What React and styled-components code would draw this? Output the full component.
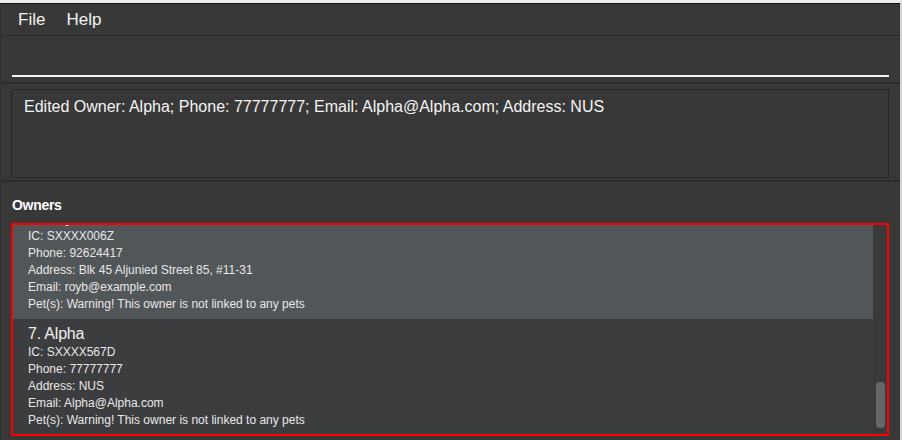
import React from 'react';
import styled, { createGlobalStyle } from 'styled-components';

const GlobalStyle = createGlobalStyle`
  html, body {
    margin: 0;
    padding: 0;
    background: #383838;
  }
  body {
    font-family: "Liberation Sans", Arial, sans-serif;
  }
`;

const Window = styled.div`
  width: 902px;
  height: 440px;
  box-sizing: border-box;
  border-top: 3px solid #ededed;
  border-right: 2px solid #d4d4d4;
  background: #383838;
  display: flex;
  flex-direction: column;
  overflow: hidden;
`;

const Frame = styled.div`
  flex: 1;
  display: flex;
  flex-direction: column;
  border-top: 1px solid #141414;
  border-left: 1px solid #303030;
  min-height: 0;
`;

const MenuBar = styled.div`
  height: 31px;
  flex-shrink: 0;
  display: flex;
  align-items: center;
  gap: 21px;
  padding-left: 17px;
  border-bottom: 1px solid #2a2a2a;
`;

const MenuItem = styled.span`
  color: #f2f2f2;
  font-size: 17px;
  line-height: 20px;
`;

const CommandArea = styled.div`
  height: 46px;
  flex-shrink: 0;
  padding: 0 11px;
  display: flex;
  align-items: flex-end;
  border-bottom: 2px solid #2c2c2c;
`;

const CommandInput = styled.div`
  flex: 1;
  height: 38px;
  border-bottom: 2px solid #f4f4f4;
  margin-bottom: 5px;
`;

const ResultArea = styled.div`
  height: 98px;
  flex-shrink: 0;
  padding: 5px 11px 0 10px;
  box-sizing: border-box;
  border-bottom: 2px solid #2c2c2c;
`;

const ResultBox = styled.div`
  height: 89px;
  box-sizing: border-box;
  border: 1px solid #262626;
  padding: 8px 12px;
  color: #f4f4f4;
  font-size: 16px;
`;

const ListSection = styled.div`
  flex: 1;
  display: flex;
  flex-direction: column;
  padding: 15px 11px 4px 10px;
  min-height: 0;
`;

const SectionTitle = styled.div`
  color: #ffffff;
  font-size: 14px;
  font-weight: bold;
  letter-spacing: -0.3px;
  margin-left: 1px;
  height: 26px;
  flex-shrink: 0;
`;

const ListBox = styled.div`
  flex: 1;
  display: flex;
  border: 2px solid #ff0000;
  background: #383838;
  min-height: 0;
`;

const Viewport = styled.div`
  flex: 1;
  overflow: hidden;
`;

const Cells = styled.div`
  display: flex;
  flex-direction: column;
`;

const Cell = styled.div`
  background: ${(p) => (p.selected ? '#515658' : '#3c3d3f')};
  padding: ${(p) => (p.selected ? '3px 16px 6px 15px' : '5px 16px 8px 15px')};
  display: flex;
  flex-direction: column;
`;

const Name = styled.div`
  color: #f0f0f0;
  font-size: 16px;
  line-height: 20px;
  letter-spacing: -0.2px;
`;

const Field = styled.div`
  color: #e8e8e8;
  font-size: 12px;
  line-height: 17px;
`;

const ScrollTrack = styled.div`
  width: 14px;
  background: #3a3a3a;
  display: flex;
  flex-direction: column;
  justify-content: flex-end;
  padding: 0 2px 6px 3px;
  box-sizing: border-box;
`;

const ScrollThumb = styled.div`
  height: 46px;
  border-radius: 4px;
  background: #676767;
`;

const owners = [
  {
    index: 6,
    name: 'Roy Balakrishnan',
    ic: 'SXXXX006Z',
    phone: '92624417',
    address: 'Blk 45 Aljunied Street 85, #11-31',
    email: 'royb@example.com',
    selected: true,
  },
  {
    index: 7,
    name: 'Alpha',
    ic: 'SXXXX567D',
    phone: '77777777',
    address: 'NUS',
    email: 'Alpha@Alpha.com',
    selected: false,
  },
];

const OwnerCell = ({ owner }) => (
  <Cell selected={owner.selected}>
    <Name>
      {owner.index}. {owner.name}
    </Name>
    <Field>IC: {owner.ic}</Field>
    <Field>Phone: {owner.phone}</Field>
    <Field>Address: {owner.address}</Field>
    <Field>Email: {owner.email}</Field>
    <Field>Pet(s): Warning! This owner is not linked to any pets</Field>
  </Cell>
);

// how far the list has been scrolled down
const scrollOffset = 20;

const App = () => (
  <>
    <GlobalStyle />
    <Window>
      <Frame>
        <MenuBar>
          <MenuItem>File</MenuItem>
          <MenuItem>Help</MenuItem>
        </MenuBar>
        <CommandArea>
          <CommandInput />
        </CommandArea>
        <ResultArea>
          <ResultBox>
            Edited Owner: Alpha; Phone: 77777777; Email: Alpha@Alpha.com; Address: NUS
          </ResultBox>
        </ResultArea>
        <ListSection>
          <SectionTitle>Owners</SectionTitle>
          <ListBox>
            <Viewport>
              <Cells style={{ marginTop: -scrollOffset }}>
                {owners.map((o) => (
                  <OwnerCell key={o.index} owner={o} />
                ))}
              </Cells>
            </Viewport>
            <ScrollTrack>
              <ScrollThumb />
            </ScrollTrack>
          </ListBox>
        </ListSection>
      </Frame>
    </Window>
  </>
);

export default App;
